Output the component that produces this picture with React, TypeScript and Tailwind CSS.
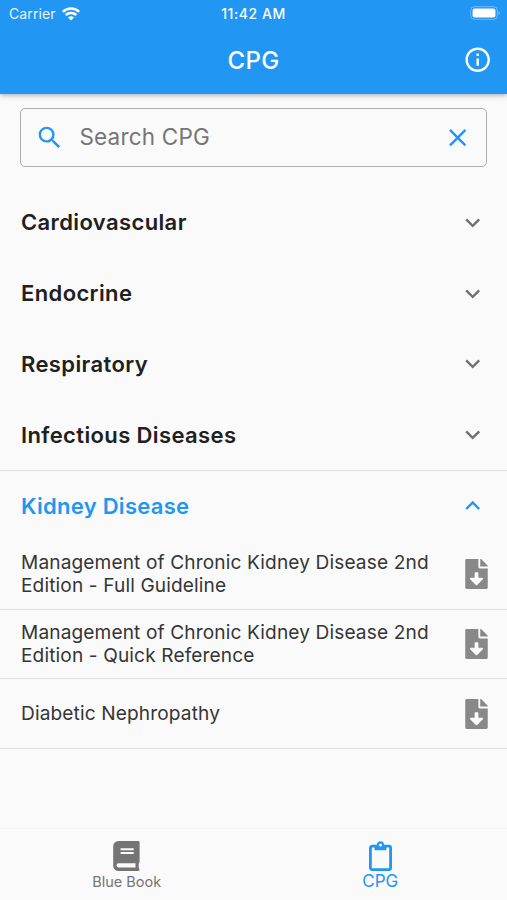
import { FaFileDownload } from "react-icons/fa";
import {
  MdClose,
  MdExpandLess,
  MdExpandMore,
  MdInfoOutline,
  MdSearch,
} from "react-icons/md";

const categories = ["Cardiovascular", "Endocrine", "Respiratory", "Infectious Diseases"];

const guidelines = [
  ["Management of Chronic Kidney Disease 2nd", "Edition - Full Guideline"],
  ["Management of Chronic Kidney Disease 2nd", "Edition - Quick Reference"],
  ["Diabetic Nephropathy"],
];

function StatusBar() {
  return (
    <div className="grid h-[27px] grid-cols-3 items-center px-[9px] text-[14px]">
      <div className="flex items-center gap-[6px]">
        <span className="tracking-[0.1px] opacity-90">Carrier</span>
        <svg width="18" height="14" viewBox="0 0 18 14" fill="none" stroke="white" strokeWidth="2.5">
          <path d="M0.8 4.9C5.3 0.5 12.7 0.5 17.2 4.9" />
          <path d="M3.7 8C6.6 5.2 11.4 5.2 14.3 8" />
          <path d="M6 10.4C7.7 8.9 10.3 8.9 12 10.4L9 13.5Z" fill="white" stroke="none" />
        </svg>
      </div>
      <span className="text-center text-[14px] font-medium tracking-[0.55px]">11:42 AM</span>
      <svg className="-mr-[3px] justify-self-end" width="31" height="15" viewBox="0 0 31 15">
        <rect x="0.7" y="0.7" width="26.6" height="12.6" rx="3.6" fill="none" stroke="white" strokeOpacity="0.35" />
        <rect x="2.6" y="2.6" width="22.8" height="8.8" rx="2" fill="white" />
        <path d="M28.6 5v4c1.6-.6 1.6-3.4 0-4Z" fill="white" fillOpacity="0.4" />
      </svg>
    </div>
  );
}

function AppBar() {
  return (
    <header className="relative z-10 h-[94px] shrink-0 bg-[#2196f3] text-white shadow-[0_1px_5px_rgba(0,0,0,0.35)]">
      <StatusBar />
      <div className="grid h-[66px] grid-cols-[1fr_auto_1fr] items-center px-[15px]">
        <h1 className="col-start-2 pt-[2px] text-[24px] font-medium leading-none tracking-[0.4px]">CPG</h1>
        <MdInfoOutline className="justify-self-end" size={29.4} />
      </div>
    </header>
  );
}

function SearchField() {
  return (
    <div className="mx-5 mt-[14px] flex h-[59px] shrink-0 items-center rounded-[5px] border-[1.5px] border-[#acacac] pl-[14px] pr-[14px]">
      <MdSearch size={29.4} className="shrink-0 text-[#2196f3]" />
      <span className="ml-[15px] grow text-[22.5px] leading-none tracking-[0.2px] text-[#757575]">Search CPG</span>
      <MdClose size={29.4} className="shrink-0 text-[#2196f3]" />
    </div>
  );
}

function BookIcon() {
  return (
    <svg width="27" height="30" viewBox="0 0 27 30">
      <path
        d="M5.5 0H25.2Q26.6 0 26.6 1.4V20.8Q26.6 21.6 26 22.1C25.6 23.6 25.6 26 26 27.4Q26.6 27.9 26.6 28.6Q26.6 30 25.2 30H5.5A5.3 5.3 0 0 1 0.2 24.7V5.3A5.3 5.3 0 0 1 5.5 0Z"
        fill="currentColor"
      />
      <path d="M7.6 7.2H20.7V9.2H7.6ZM7.6 11H20.7V13H7.6Z" fill="#fafafa" />
      <path d="M5.6 22.3H22.6C22.4 23.5 22.4 25 22.6 26.4H5.6A2.05 2.05 0 0 1 5.6 22.3Z" fill="#fafafa" />
    </svg>
  );
}

function ClipboardIcon() {
  return (
    <svg width="23" height="30" viewBox="0 0 23 30" fill="none" stroke="currentColor">
      <rect x="1.4" y="5.2" width="20.2" height="23.4" rx="1.8" strokeWidth="2.8" />
      <path
        d="M5.6 4.4H7.8C7.8 -1.1 15.2 -1.1 15.2 4.4H17.4V8.4Q17.4 9.3 16.5 9.3H6.5Q5.6 9.3 5.6 8.4Z"
        fill="currentColor"
        stroke="none"
      />
      <circle cx="11.5" cy="3.9" r="1.5" fill="#fafafa" stroke="none" />
    </svg>
  );
}

function NavItem({ label, active, children }: { label: string; active?: boolean; children: React.ReactNode }) {
  return (
    <div className={`flex flex-1 flex-col items-center pt-[12px] ${active ? "text-[#2196f3]" : "text-[#747474]"}`}>
      {children}
      <span className={active ? "mt-px text-[17px] leading-[18px]" : "mt-[2px] text-[14.5px] leading-[18px]"}>
        {label}
      </span>
    </div>
  );
}

export default function App() {
  return (
    <div className="flex h-[900px] w-[507px] flex-col overflow-hidden bg-[#fafafa] font-['Inter',sans-serif]">
      <AppBar />
      <SearchField />
      <main className="mt-5">
        {categories.map((name) => (
          <div key={name} className="flex h-[70.8px] items-center justify-between pl-[21px] pr-5">
            <h2 className="pt-px text-[22px] font-semibold tracking-[0.38px] text-[#202020]">{name}</h2>
            <MdExpandMore size={29.4} className="text-[#707070]" />
          </div>
        ))}
        <section className="border-t border-[#dedede]">
          <div className="flex h-[69px] items-center justify-between pl-[21px] pr-5">
            <h2 className="pt-[2px] text-[22px] font-semibold tracking-[0.28px] text-[#2196f3]">Kidney Disease</h2>
            <MdExpandLess size={29.4} className="text-[#2196f3]" />
          </div>
          {guidelines.map((lines) => (
            <div
              key={lines.join(" ")}
              className="flex h-[69.6px] items-center justify-between border-b border-[#dedede] pl-[21px] pr-[19px]"
            >
              <p className="text-[19.1px] leading-[23px] tracking-[0.13px] text-[#353535]">
                {lines.map((line) => (
                  <span key={line} className="block whitespace-nowrap">{line}</span>
                ))}
              </p>
              <FaFileDownload className="h-[30px] w-[23px] text-[#888888]" />
            </div>
          ))}
        </section>
      </main>
      <nav className="mt-auto flex h-[72px] shrink-0 border-t border-[#f6f6f6]">
        <NavItem label="Blue Book">
          <BookIcon />
        </NavItem>
        <NavItem label="CPG" active>
          <ClipboardIcon />
        </NavItem>
      </nav>
    </div>
  );
}
